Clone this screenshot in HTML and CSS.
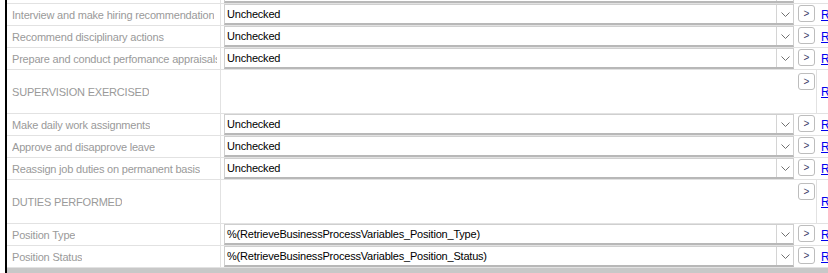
FILE: index.html
```html
<!DOCTYPE html>
<html>
<head>
<meta charset="utf-8">
<link rel="stylesheet" href="styles.css">
</head>
<body>
<div class="frame">
  <div class="grid">
    <div class="row">
      <div class="label"><span>Participate in hiring decisions</span></div>
      <div class="value"><div class="select"><span class="text">Unchecked</span><span class="arrow"><svg width="9" height="5" viewBox="0 0 9 5"><path d="M0.5 0.5 L4.5 4.5 L8.5 0.5" fill="none" stroke="#707070" stroke-width="1"/></svg></span></div><span class="btn">&gt;</span></div>
      <div class="link"><a href="#">Reset</a></div>
    </div>
    <div class="row">
      <div class="label"><span>Interview and make hiring recommendation</span></div>
      <div class="value"><div class="select"><span class="text">Unchecked</span><span class="arrow"><svg width="9" height="5" viewBox="0 0 9 5"><path d="M0.5 0.5 L4.5 4.5 L8.5 0.5" fill="none" stroke="#707070" stroke-width="1"/></svg></span></div><span class="btn">&gt;</span></div>
      <div class="link"><a href="#">Reset</a></div>
    </div>
    <div class="row">
      <div class="label"><span>Recommend disciplinary actions</span></div>
      <div class="value"><div class="select"><span class="text">Unchecked</span><span class="arrow"><svg width="9" height="5" viewBox="0 0 9 5"><path d="M0.5 0.5 L4.5 4.5 L8.5 0.5" fill="none" stroke="#707070" stroke-width="1"/></svg></span></div><span class="btn">&gt;</span></div>
      <div class="link"><a href="#">Reset</a></div>
    </div>
    <div class="row">
      <div class="label"><span>Prepare and conduct perfomance appraisals</span></div>
      <div class="value"><div class="select"><span class="text">Unchecked</span><span class="arrow"><svg width="9" height="5" viewBox="0 0 9 5"><path d="M0.5 0.5 L4.5 4.5 L8.5 0.5" fill="none" stroke="#707070" stroke-width="1"/></svg></span></div><span class="btn">&gt;</span></div>
      <div class="link"><a href="#">Reset</a></div>
    </div>
    <div class="row section">
      <div class="label"><span>SUPERVISION EXERCISED</span></div>
      <div class="value"><div class="spacer"></div><span class="btn">&gt;</span></div>
      <div class="link"><a href="#">Reset</a></div>
    </div>
    <div class="row">
      <div class="label"><span>Make daily work assignments</span></div>
      <div class="value"><div class="select"><span class="text">Unchecked</span><span class="arrow"><svg width="9" height="5" viewBox="0 0 9 5"><path d="M0.5 0.5 L4.5 4.5 L8.5 0.5" fill="none" stroke="#707070" stroke-width="1"/></svg></span></div><span class="btn">&gt;</span></div>
      <div class="link"><a href="#">Reset</a></div>
    </div>
    <div class="row">
      <div class="label"><span>Approve and disapprove leave</span></div>
      <div class="value"><div class="select"><span class="text">Unchecked</span><span class="arrow"><svg width="9" height="5" viewBox="0 0 9 5"><path d="M0.5 0.5 L4.5 4.5 L8.5 0.5" fill="none" stroke="#707070" stroke-width="1"/></svg></span></div><span class="btn">&gt;</span></div>
      <div class="link"><a href="#">Reset</a></div>
    </div>
    <div class="row">
      <div class="label"><span>Reassign job duties on permanent basis</span></div>
      <div class="value"><div class="select"><span class="text">Unchecked</span><span class="arrow"><svg width="9" height="5" viewBox="0 0 9 5"><path d="M0.5 0.5 L4.5 4.5 L8.5 0.5" fill="none" stroke="#707070" stroke-width="1"/></svg></span></div><span class="btn">&gt;</span></div>
      <div class="link"><a href="#">Reset</a></div>
    </div>
    <div class="row section">
      <div class="label"><span>DUTIES PERFORMED</span></div>
      <div class="value"><div class="spacer"></div><span class="btn">&gt;</span></div>
      <div class="link"><a href="#">Reset</a></div>
    </div>
    <div class="row">
      <div class="label"><span>Position Type</span></div>
      <div class="value"><div class="select"><span class="text">%(RetrieveBusinessProcessVariables_Position_Type)</span><span class="arrow"><svg width="9" height="5" viewBox="0 0 9 5"><path d="M0.5 0.5 L4.5 4.5 L8.5 0.5" fill="none" stroke="#707070" stroke-width="1"/></svg></span></div><span class="btn">&gt;</span></div>
      <div class="link"><a href="#">Reset</a></div>
    </div>
    <div class="row">
      <div class="label"><span>Position Status</span></div>
      <div class="value"><div class="select"><span class="text">%(RetrieveBusinessProcessVariables_Position_Status)</span><span class="arrow"><svg width="9" height="5" viewBox="0 0 9 5"><path d="M0.5 0.5 L4.5 4.5 L8.5 0.5" fill="none" stroke="#707070" stroke-width="1"/></svg></span></div><span class="btn">&gt;</span></div>
      <div class="link"><a href="#">Reset</a></div>
    </div>
  </div>
  <div class="footer"></div>
</div>
</body>
</html>
```
FILE: styles.css
```css
html, body {
  margin: 0;
  padding: 0;
  background: #ffffff;
  overflow: hidden;
}
body {
  font-family: "Liberation Sans", Arial, sans-serif;
  font-size: 11px;
  padding-left: 5px;
}
.frame {
  border-left: 2px solid #000;
  margin-top: -18px;
  width: 900px;
}
.grid {
  display: flex;
  flex-direction: column;
}
.row {
  display: grid;
  grid-template-columns: 214px 596px 1fr;
  height: 21px;
  border-bottom: 1px solid #e2e2e2;
}
.row.section {
  height: 43px;
}
.label {
  border-right: 1px solid #e2e2e2;
  color: #9a9a9a;
  padding-left: 5px;
  padding-right: 3px;
  display: flex;
  align-items: center;
  overflow: hidden;
  letter-spacing: -0.2px;
}
.label span {
  white-space: nowrap;
  overflow: hidden;
}
.value {
  display: flex;
  align-items: flex-start;
  padding-left: 3px;
  gap: 4px;
}
.section .value {
  border-right: 1px solid #e2e2e2;
  padding-top: 3px;
}
.select {
  width: 568px;
  height: 18px;
  border: 1px solid #cfcfcf;
  border-bottom: 2px solid #b8b8b8;
  display: flex;
  align-items: center;
  background: #fff;
}
.spacer {
  width: 570px;
}
.text {
  flex: 1;
  padding-left: 2px;
  color: #000;
  font-size: 11px;
  letter-spacing: -0.2px;
  white-space: nowrap;
  overflow: hidden;
}
.arrow {
  width: 16px;
  height: 100%;
  border-left: 1px solid #d4d4d4;
  display: flex;
  align-items: center;
  justify-content: center;
}
.btn {
  box-sizing: border-box;
  margin-top: 1px;
  width: 17px;
  height: 17px;
  border: 1px solid #bdbdbd;
  border-radius: 3px;
  display: flex;
  align-items: center;
  justify-content: center;
  font-size: 10px;
  color: #3b3b6a;
  background: #fff;
}
.section .btn {
  margin-top: 0;
}
.link {
  padding-left: 4px;
  display: flex;
  align-items: center;
  font-size: 12px;
}
.link a {
  color: #0000ee;
  text-decoration: underline;
}
.footer {
  height: 10px;
  background: #c8c8c8;
}
```
